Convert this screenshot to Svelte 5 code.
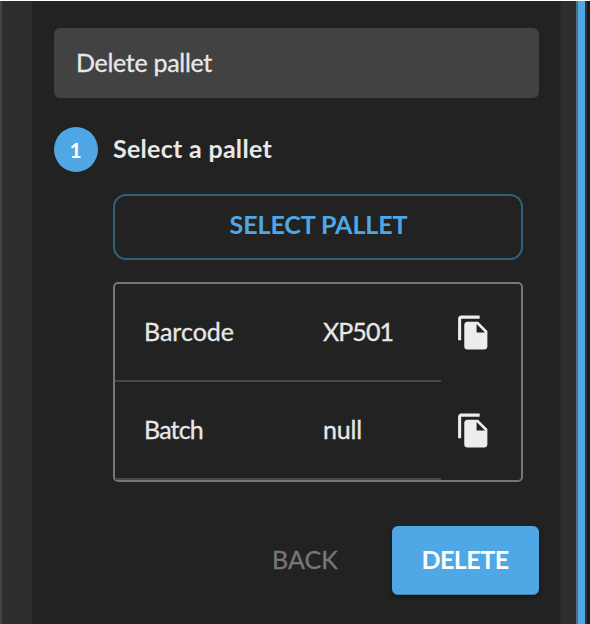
<script>
  const rows = [
    { label: 'Barcode', value: 'XP501', labelWidth: 90, valueWidth: 70 },
    { label: 'Batch', value: 'null', labelWidth: 59, valueWidth: 39 }
  ];

  function fit(node, width) {
    const apply = () => {
      node.style.letterSpacing = '0px';
      const count = node.textContent.length;
      const natural = node.getBoundingClientRect().width;
      node.style.letterSpacing = `${(width - natural) / count}px`;
    };
    apply();
    document.fonts.ready.then(apply);
  }
</script>

<div class="page">
  <main>
    <header><span use:fit={136}>Delete pallet</span></header>
    <div class="step">
      <div class="number">1</div>
      <h2><span use:fit={159}>Select a pallet</span></h2>
    </div>
    <div class="content">
      <button class="select"><span use:fit={178}>SELECT PALLET</span></button>
      <div class="table">
        {#each rows as row}
          <div class="row">
            <div class="cell label"><span use:fit={row.labelWidth}>{row.label}</span></div>
            <div class="cell value"><span use:fit={row.valueWidth}>{row.value}</span></div>
            <button class="copy" aria-label="Copy {row.label}">
              <svg viewBox="0 0 24 24" width="37" height="37" fill="currentColor">
                <path d="M16 1H4c-1.1 0-2 .9-2 2v14h2V3h12V1zm-1 4l6 6v10c0 1.1-.9 2-1.99 2H7.99C6.89 23 6 22.1 6 21l.01-14c0-1.1.89-2 1.99-2h7zm-1 7h5.5L14 6.5V12z" />
              </svg>
            </button>
          </div>
        {/each}
      </div>
    </div>
    <footer>
      <button class="back"><span use:fit={66}>BACK</span></button>
      <button class="delete"><span use:fit={87}>DELETE</span></button>
    </footer>
  </main>
  <div class="gutter"></div>
  <div class="accent"></div>
</div>

<style>
  :global(body) { background: #1c1c1c; }
  .page, .page * { box-sizing: border-box; }
  .page {
    width: 590px;
    height: 624px;
    overflow: hidden;
    display: flex;
    border-top: 1px solid #fff;
    background: #1b1b1b;
    color: #e8e8e8;
    font: 25px/30px Lato, sans-serif;
    white-space: nowrap;
  }
  .page::before {
    content: '';
    box-sizing: border-box;
    flex: 0 0 32px;
    background: #2d2d2d;
    border-left: 2px solid #444;
  }
  span { display: inline-block; -webkit-text-stroke: 0.3px currentColor; }
  h2 span, .select span, .delete span { -webkit-text-stroke: 0; }
  main {
    width: 528px;
    flex: none;
    background: #222;
    padding: 27px 21px 0 22px;
  }
  header {
    height: 70px;
    border-radius: 6px;
    background: #424242;
    display: flex;
    align-items: center;
    padding: 0 0 3px 22px;
  }
  .step {
    display: flex;
    align-items: center;
    gap: 15px;
    height: 45px;
    margin-top: 29px;
  }
  .number {
    width: 44px;
    height: 45px;
    border-radius: 50%;
    background: #4fa8e5;
    color: #fff;
    font-size: 21px;
    font-weight: 700;
    display: flex;
    align-items: center;
    justify-content: center;
    padding-right: 1px;
  }
  h2 { margin: 0; font: inherit; font-weight: 700; padding-bottom: 3px; }
  .content { margin: 22px 16px 0 59px; }
  button {
    font: inherit;
    background: none;
    border: 0;
    padding: 0;
    color: inherit;
    display: flex;
    align-items: center;
    justify-content: center;
  }
  .select {
    width: 100%;
    height: 66px;
    border: 2px solid #31607f;
    border-radius: 13px;
    color: #4fa8e5;
    font-weight: 700;
    padding: 0 0 7px 1px;
  }
  .table {
    margin-top: 22px;
    height: 200px;
    border: 2px solid #757575;
    border-radius: 5px;
  }
  .row { display: flex; height: 98px; }
  .cell {
    border-bottom: 2px solid #484848;
    display: flex;
    align-items: center;
    padding-bottom: 2px;
  }
  .label { width: 178px; padding-left: 29px; }
  .value { width: 148px; padding-left: 30px; }
  .copy { width: 66px; color: #ededed; padding: 0 2px 1px 0; }
  svg { display: block; }
  footer {
    display: flex;
    justify-content: flex-end;
    gap: 16px;
    margin-top: 44px;
  }
  .back, .delete { height: 69px; padding-bottom: 4px; }
  .back { width: 105px; color: #777; padding-right: 7px; margin-right: 15px; }
  .delete {
    width: 147px;
    border-radius: 6px;
    background: #4fa8e5;
    color: #fff;
    font-weight: 700;
    padding-right: 1px;
    box-shadow: inset 0 -1px #3c7eac, 0 2px 4px #151515;
  }
  .gutter { width: 16px; background: #2d2d2d; border-left: 1px solid #262626; }
  .accent {
    width: 11px;
    background: #4fa8e5;
    border-left: 2px solid #56707f;
    border-right: 2px solid #333;
  }
</style>
